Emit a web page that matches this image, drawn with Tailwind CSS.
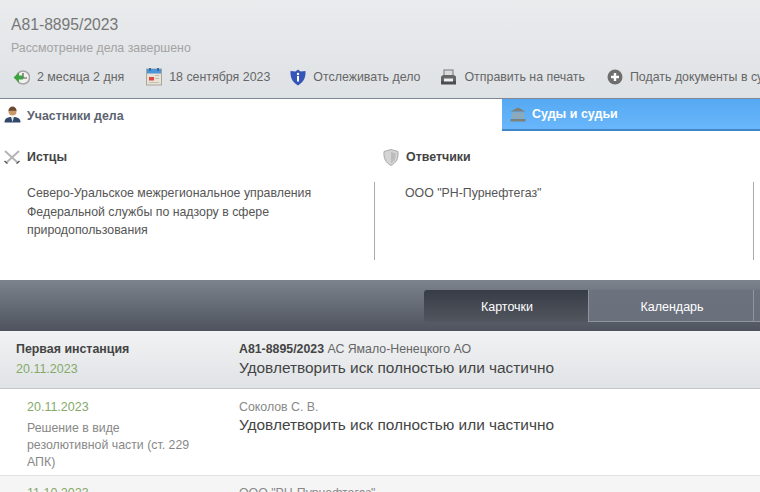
<!DOCTYPE html>
<html lang="ru">
  <head>
    <meta charset="UTF-8" />
    <title>А81-8895/2023</title>
    <script src="https://cdn.jsdelivr.net/npm/@tailwindcss/browser@4"></script>
  </head>
  <body class="w-[760px] h-[492px] overflow-hidden bg-white font-['Liberation_Sans',Arial,sans-serif] text-[13px] text-[#555]">
    <!-- case header -->
    <div class="h-[99px] border-b border-[#7f8894] bg-gradient-to-b from-[#e9ebed] to-[#dfe2e5] pl-[11px] pt-[15px] whitespace-nowrap">
      <div class="text-[15.7px] leading-[19px] text-[#777]">А81-8895/2023</div>
      <div class="mt-[6px] text-[12.35px] leading-[16px] text-[#a3a3a3]">Рассмотрение дела завершено</div>
      <div class="mt-[12px] flex items-center h-[18px] text-[#666] text-[12.4px]">
        <svg class="shrink-0 ml-[2px] w-[17px] h-[17px]" viewBox="0 0 17 17">
          <circle cx="10" cy="8.500" r="6.500" fill="#f0f0ee" stroke="#a5a5a5" stroke-width="1.500"/>
          <path d="M10 4v5h4" fill="none" stroke="#555" stroke-width="1.200"/>
          <path d="M0.500 8.500 6 3.500v3h4v4H6v3z" fill="#3fa33f"/>
        </svg>
        <span class="ml-[7px]">2 месяца 2 дня</span>

        <svg class="shrink-0 ml-[22px] w-[16px] h-[18px]" viewBox="0 0 16 18">
          <rect x="0.500" y="1" width="15" height="16" fill="#e8e2d6" stroke="#a9a69c"/>
          <rect x="1" y="1" width="14" height="4.500" fill="#4d94d8"/>
          <rect x="3" y="0" width="2" height="3" fill="#2f6fb0"/>
          <rect x="11" y="0" width="2" height="3" fill="#2f6fb0"/>
          <rect x="3" y="9" width="5" height="3.500" fill="#e0473f"/>
          <path d="M3 14.500h10M9 7.500h4M9 10.500h4" stroke="#c5c0b4"/>
        </svg>
        <span class="ml-[7px]">18 сентября 2023</span>

        <svg class="shrink-0 ml-[20px] w-[16px] h-[17px]" viewBox="0 0 16 17">
          <path d="M8 0.500 10.500 2.500 15.500 2c.4 6-1.500 11-7.500 14.500C2 13 .1 8 .5 2l5 .5z" fill="#3556b8"/>
          <circle cx="8" cy="5" r="1.200" fill="#fff"/>
          <rect x="7" y="7" width="2" height="5.500" fill="#fff"/>
        </svg>
        <span class="ml-[7px]">Отслеживать дело</span>

        <svg class="shrink-0 ml-[20px] w-[17px] h-[17px]" viewBox="0 0 17 17">
          <rect x="4" y="1" width="9" height="6" fill="#d8dadc" stroke="#777"/>
          <path d="M1 7.500 3 6h11l2 1.500V13H1z" fill="#666"/>
          <rect x="1" y="12" width="15" height="3.500" fill="#4a4d52"/>
          <rect x="4" y="9.500" width="9" height="3" fill="#eee"/>
        </svg>
        <span class="ml-[7px]">Отправить на печать</span>

        <svg class="shrink-0 ml-[22px] w-[16px] h-[16px]" viewBox="0 0 16 16">
          <circle cx="8" cy="8" r="7.500" fill="#6e6e6e"/>
          <path d="M8 4v8M4 8h8" stroke="#fff" stroke-width="2.400"/>
        </svg>
        <span class="ml-[7px]">Подать документы в суд</span>
      </div>
    </div>

    <!-- tabs -->
    <div class="flex h-[32px]">
      <div class="w-[502px] flex items-center pl-[4px] pt-[2px] font-bold text-[12.4px] text-[#5d6470]">
        <svg class="shrink-0 w-[17px] h-[17px] -mt-[3px]" viewBox="0 0 17 17">
          <path d="M0.500 16.500c0-4 2.500-5.500 8-5.500s8 1.500 8 5.500z" fill="#33476b"/>
          <path d="M7 11h3l-1.500 5z" fill="#dfe3ea"/>
          <circle cx="8.500" cy="5.500" r="4" fill="#c9996d"/>
          <path d="M4.500 5c0-3 2-4.500 4-4.500s4 1.500 4 4.500c-2-.5-5-.5-8 0z" fill="#6b4a2e"/>
        </svg>
        <span class="ml-[6px]">Участники дела</span>
      </div>
      <div class="flex-1 flex items-center pl-[8px] pt-[1px] border-b-2 border-[#3f86c9] bg-gradient-to-b from-[#55a9f2] to-[#69b6fb] font-bold text-[12.5px] text-white">
        <svg class="shrink-0 w-[16px] h-[15px]" viewBox="0 0 16 15">
          <path d="M8 0.500 15.500 4.500H.5z" fill="#7f8078"/>
          <path d="M2.500 5.500h2v6h-2zM5.500 5.500h2v6h-2zM8.500 5.500h2v6h-2zM11.500 5.500h2v6h-2z" fill="#a5a69a"/>
          <rect x="0.500" y="12" width="15" height="2.500" fill="#7f8078"/>
        </svg>
        <span class="ml-[6px]">Суды и судьи</span>
      </div>
    </div>

    <!-- parties -->
    <div class="h-[149px] flex">
      <div class="w-[379px] pt-[17px]">
        <div class="flex items-center h-[18px] pl-[4px] font-bold text-[12.4px] text-[#444]">
          <svg class="shrink-0 w-[16px] h-[14px]" viewBox="0 0 16 14">
            <path d="M1 1 13 12M15 1 3 12" stroke="#b5b5b5" stroke-width="2"/>
            <path d="M0.500 11l3 2.500M15.500 11l-3 2.500" stroke="#555" stroke-width="1.500"/>
          </svg>
          <span class="ml-[7px]">Истцы</span>
        </div>
        <div class="mt-[16px] flex h-[78px]">
          <div class="w-[347px] ml-[27px] text-[12.33px] leading-[18.7px] mt-[2px] text-[#555]">
            Северо-Уральское межрегиональное управления<br />Федеральной службы по надзору в сфере<br />природопользования
          </div>
          <div class="w-px bg-[#aaa]"></div>
        </div>
      </div>
      <div class="flex-1 pt-[17px]">
        <div class="flex items-center h-[18px] pl-[4px] font-bold text-[12.4px] text-[#444]">
          <svg class="shrink-0 w-[16px] h-[17px]" viewBox="0 0 16 17">
            <path d="M8 .5 15 2.500c.5 7-1.500 11-7 14C2.500 13.500.5 9.500 1 2.500z" fill="#d4d4d4" stroke="#aaa"/>
            <path d="M8 3l4.500 1.300c.3 5-1 8-4.500 10z" fill="#bcbcbc"/>
          </svg>
          <span class="ml-[7px]">Ответчики</span>
        </div>
        <div class="mt-[16px] flex h-[78px]">
          <div class="w-[348px] ml-[26px] text-[12.33px] leading-[18.7px] mt-[2px] text-[#555]">ООО "РН-Пурнефтегаз"</div>
          <div class="w-px bg-[#aaa]"></div>
        </div>
      </div>
    </div>

    <!-- dark toolbar -->
    <div class="h-[51px] bg-gradient-to-b from-[#7d838d] to-[#4e535e] pl-[424px] pt-[10px] flex whitespace-nowrap text-[12.5px] text-white">
      <div class="w-[165px] h-[32px] pt-[3px] pl-[2px] flex items-center justify-center rounded-l-[3px] bg-gradient-to-b from-[#383c46] to-[#52565f] border-r border-[#8f95a0]">Карточки</div>
      <div class="w-[165px] h-[32px] pt-[3px] pl-[2px] flex items-center justify-center bg-gradient-to-b from-[#6d737e] to-[#6a707b] border-r border-b border-[#8f95a0]">Календарь</div>
      <div class="flex-1 h-[32px] bg-gradient-to-b from-[#6d737e] to-[#6a707b] border-b border-[#8f95a0]"></div>
    </div>

    <!-- instance header -->
    <div class="h-[58px] flex border-b border-[#c4c7ca] bg-gradient-to-b from-[#f1f2f3] to-[#e0e3e6]">
      <div class="w-[239px] pl-[16px] pt-[10px]">
        <div class="font-bold text-[12.4px] leading-[16px] text-[#444]">Первая инстанция</div>
        <div class="mt-[4px] text-[12.5px] leading-[16px] text-[#86a96a]">20.11.2023</div>
      </div>
      <div class="flex-1 pt-[10px]">
        <div class="text-[12.33px] leading-[16px] text-[#666]"><b class="text-[#444]">А81-8895/2023</b> АС Ямало-Ненецкого АО</div>
        <div class="mt-[1px] text-[15.4px] leading-[20px] text-[#444]">Удовлетворить иск полностью или частично</div>
      </div>
    </div>

    <!-- document rows -->
    <div class="h-[87px] flex border-b border-[#e0e0e0]">
      <div class="w-[239px] pl-[27px] pt-[10px]">
        <div class="text-[12.5px] leading-[16px] text-[#86a96a]">20.11.2023</div>
        <div class="mt-[5px] w-[175px] text-[12.33px] leading-[17px] text-[#888]">Решение в виде резолютивной части (ст. 229 АПК)</div>
      </div>
      <div class="flex-1 pt-[10px]">
        <div class="text-[12.33px] leading-[16px] text-[#888]">Соколов С. В.</div>
        <div class="text-[15.4px] leading-[20px] text-[#444]">Удовлетворить иск полностью или частично</div>
      </div>
    </div>
    <div class="h-[20px] flex bg-[#f5f5f5]">
      <div class="w-[239px] pl-[27px] pt-[9px] text-[12.5px] leading-[16px] text-[#86a96a]">11.10.2023</div>
      <div class="flex-1 pt-[9px] text-[12.33px] leading-[16px] text-[#888]">ООО "РН-Пурнефтегаз"</div>
    </div>
  </body>
</html>
